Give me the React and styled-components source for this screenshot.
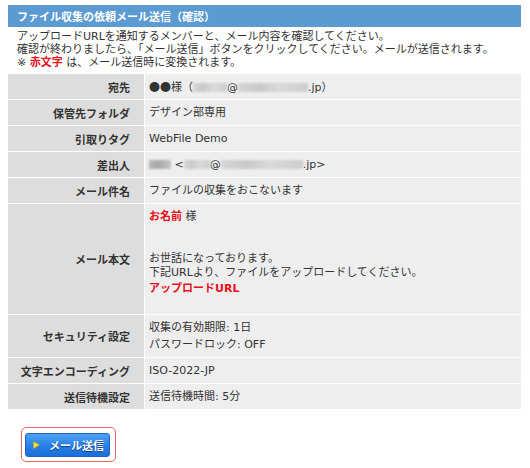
import React from "react";
import styled, { createGlobalStyle } from "styled-components";

const GlobalStyle = createGlobalStyle`
  html, body {
    margin: 0;
    padding: 0;
    background: #ffffff;
  }
  body {
    font-family: "DejaVu Sans", "Noto Sans CJK JP", sans-serif;
    color: #333333;
    font-size: 11px;
  }
`;

const Page = styled.div`
  width: 513px;
  padding: 5px 9px 0 8px;
`;

const TitleBar = styled.h2`
  margin: 0;
  height: 22px;
  line-height: 22px;
  padding-left: 9px;
  background: #5b9bd2;
  color: #ffffff;
  font-family: "Noto Sans CJK JP", sans-serif;
  font-size: 11px;
  font-weight: 700;
`;

const Intro = styled.div`
  padding: 3px 0 0 9px;
  line-height: 13px;
  font-size: 11px;
`;

const Red = styled.span`
  color: #e8101a;
  font-weight: 700;
`;

const Wide = styled.span`
  font-family: "Noto Sans CJK JP", sans-serif;
`;

const Table = styled.div`
  margin-top: 5px;
  display: grid;
  grid-template-columns: 136px 1fr;
  column-gap: 1px;
  row-gap: 1px;
  background: #ffffff;
`;

const Label = styled.div`
  background: #dddddd;
  font-weight: 700;
  text-align: right;
  padding-right: 14px;
  display: flex;
  align-items: center;
  justify-content: flex-end;
  min-height: 25px;
`;

const Value = styled.div`
  background: #eeeeee;
  padding: ${(p) => p.$pad || "0 4px"};
  min-height: 25px;
  display: flex;
  flex-direction: column;
  justify-content: ${(p) => (p.$top ? "flex-start" : "center")};
  line-height: ${(p) => p.$lh || "13px"};
  box-sizing: border-box;
`;

const Line = styled.div`
  margin-top: ${(p) => p.$mt || 0}px;
  white-space: nowrap;
`;

const Mask = styled.span`
  display: inline-block;
  width: ${(p) => p.$w}px;
  height: 9px;
  vertical-align: -1px;
  background: ${(p) =>
    p.$dark
      ? "linear-gradient(90deg, #b8b8b8, #a9a9a9 40%, #c4c4c4)"
      : "linear-gradient(90deg, #d6d6d6, #c9c9c9 30%, #dadada 60%, #cdcdcd)"};
  filter: blur(1.2px);
`;

const ButtonFrame = styled.div`
  display: inline-block;
  margin: 18px 0 0 13px;
  padding: 5px 5px 4px 3px;
  border: 1px solid #e26767;
  border-radius: 5px;
`;

const SendButton = styled.button`
  display: flex;
  align-items: center;
  gap: 9px;
  height: 24px;
  width: 85px;
  padding: 0 0 0 7px;
  border: 1px solid #1b63c6;
  border-radius: 3px;
  background: linear-gradient(#4ea3f3, #2b82e6 50%, #1a6fdb);
  color: #ffffff;
  font-family: "Noto Sans CJK JP", sans-serif;
  font-size: 11px;
  font-weight: 700;
  text-shadow: 0 1px 1px rgba(0, 40, 110, 0.8);
  cursor: pointer;
`;

const PlayMark = () => (
  <svg width="7" height="8" viewBox="0 0 7 8">
    <polygon points="0.5,0.5 6.5,4 0.5,7.5" fill="#f3e53a" stroke="#b9a51b" strokeWidth="0.7" />
  </svg>
);

const rows = [
  {
    label: "宛先",
    value: (
      <Line>
        <Wide>●●</Wide>様（<Mask $w={34} />@<Mask $w={70} />.jp）
      </Line>
    ),
  },
  { label: "保管先フォルダ", value: <Line>デザイン部専用</Line> },
  { label: "引取りタグ", value: <Line>WebFile Demo</Line> },
  {
    label: "差出人",
    value: (
      <Line>
        <Mask $w={22} $dark /> &lt;<Mask $w={26} />@<Mask $w={82} />.jp&gt;
      </Line>
    ),
  },
  { label: "メール件名", value: <Line>ファイルの収集をおこないます</Line> },
];

export default function App() {
  return (
    <Page>
      <GlobalStyle />
      <TitleBar>ファイル収集の依頼メール送信（確認）</TitleBar>
      <Intro>
        <div>アップロードURLを通知するメンバーと、メール内容を確認してください。</div>
        <div>確認が終わりましたら、「メール送信」ボタンをクリックしてください。メールが送信されます。</div>
        <div>
          ※ <Red>赤文字</Red> は、メール送信時に変換されます。
        </div>
      </Intro>

      <Table>
        {rows.map((r) => (
          <React.Fragment key={r.label}>
            <Label>{r.label}</Label>
            <Value>{r.value}</Value>
          </React.Fragment>
        ))}

        <Label>メール本文</Label>
        <Value $top $lh="14px" $pad="6px 4px 18px">
          <Line>
            <Red>お名前</Red> 様
          </Line>
          <Line>&nbsp;</Line>
          <Line>&nbsp;</Line>
          <Line>お世話になっております。</Line>
          <Line>下記URLより、ファイルをアップロードしてください。</Line>
          <Line $mt={2}>
            <Red>アップロードURL</Red>
          </Line>
        </Value>

        <Label>セキュリティ設定</Label>
        <Value $lh="17px" $pad="4px 4px">
          <Line>収集の有効期限: 1日</Line>
          <Line>パスワードロック: OFF</Line>
        </Value>

        <Label>文字エンコーディング</Label>
        <Value>
          <Line>ISO-2022-JP</Line>
        </Value>

        <Label>送信待機設定</Label>
        <Value>
          <Line>送信待機時間: 5分</Line>
        </Value>
      </Table>

      <ButtonFrame>
        <SendButton type="button">
          <PlayMark />
          メール送信
        </SendButton>
      </ButtonFrame>
    </Page>
  );
}
